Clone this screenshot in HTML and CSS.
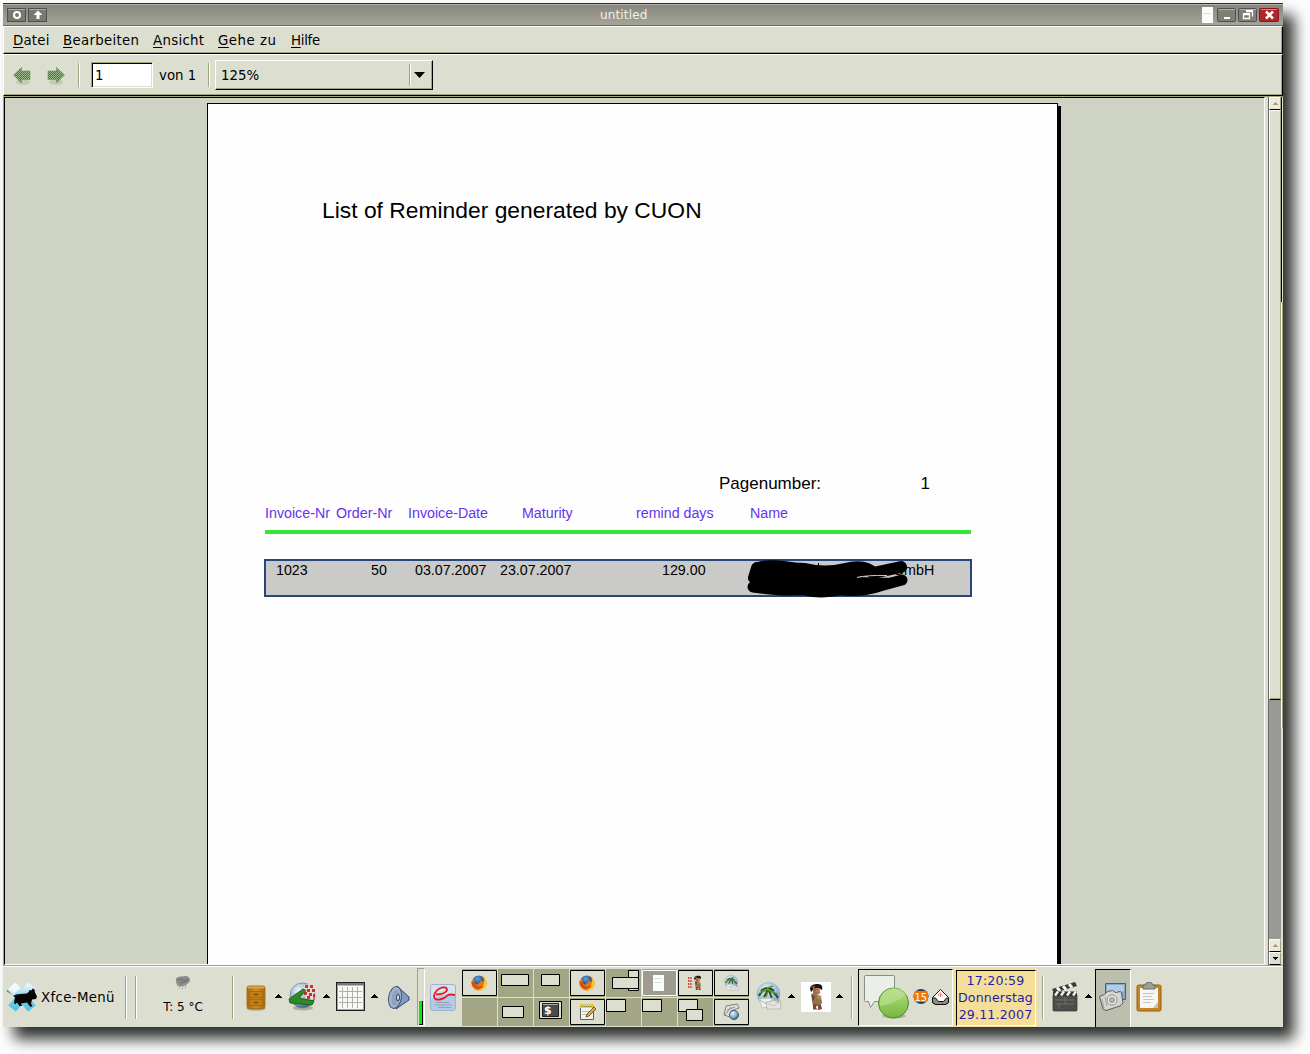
FILE: index.html
```html
<!DOCTYPE html>
<html lang="de">
<head>
<meta charset="utf-8">
<title>untitled</title>
<link rel="stylesheet" href="styles.css">
</head>
<body>
<svg class="defs" width="0" height="0">
  <defs>
    <radialGradient id="ball" cx=".35" cy=".3" r=".8"><stop offset="0" stop-color="#eef6fa"/><stop offset=".55" stop-color="#8fb0cc"/><stop offset="1" stop-color="#2c4a72"/></radialGradient>
    <radialGradient id="sky" cx=".4" cy=".3" r=".8"><stop offset="0" stop-color="#e3eff6"/><stop offset=".7" stop-color="#8db8d8"/><stop offset="1" stop-color="#5c8db8"/></radialGradient>
    <radialGradient id="fox" cx=".4" cy=".35" r=".7"><stop offset="0" stop-color="#59a8e0"/><stop offset="1" stop-color="#1b3c86"/></radialGradient>
    <linearGradient id="ice" x2="0" y2="1"><stop offset="0" stop-color="#e4f5fb"/><stop offset=".5" stop-color="#7fd0ec"/><stop offset="1" stop-color="#55c4ea"/></linearGradient>
    <linearGradient id="wood" x2="1"><stop offset="0" stop-color="#a96a10"/><stop offset=".5" stop-color="#d08c22"/><stop offset="1" stop-color="#a96a10"/></linearGradient>
    <linearGradient id="green" x2="0" y2="1"><stop offset="0" stop-color="#b4dd84"/><stop offset="1" stop-color="#76b83e"/></linearGradient>
    <pattern id="dither" width="2" height="2" patternUnits="userSpaceOnUse"><path d="M0 0h1v1h-1zM1 1h1v1h-1z" fill="#47724a"/><path d="M1 0h1v1h-1zM0 1h1v1h-1z" fill="#9bbb8c"/></pattern>
    <symbol id="firefox" viewBox="0 0 16 16">
      <circle cx="8" cy="8" r="7.600" fill="#e8760c"/>
      <path d="M13 2c3.500 3 3.500 9 0 12-2 1.500-4 1.800-6 1.500C12 13 14 7 13 2z" fill="#f8c62c"/>
      <path d="M3 2.500Q7-.5 11.500 2 13 4 12.500 7 11 5 9 5.500q1 2-1 2.500-1.500 0-1.500 1.500Q3 9 3.500 6 2.500 4 3 2.500z" fill="url(#fox)"/>
      <path d="M.4 6c0 5 4 8.500 9 7.500 2-.5 3-2 3-3.500-3 3-8 2-9-2z" fill="#cc4f0c"/>
    </symbol>
    <symbol id="up" viewBox="0 0 7 4"><path d="M3 0h1v1h1v1h1v1h1v1H0V3h1V2h1V1h1z" fill="#000"/></symbol>
    <symbol id="figure" viewBox="0 0 16 28">
      <path d="M2 6C2 2 6 1 10 1c4 0 5 3 4 6l-4-2-4 1-3 3z" fill="#1c1512"/>
      <path d="M5 5l6 .5 1.500 4-3 2.500-4.500-1.500z" fill="#a5694a"/><path d="M3 4l4-1-1 2zM8 7l4 1-1 2-3-1z" fill="#d9745e"/>
      <path d="M3 11l3-1 3 2 4 1 1 7-2 3H5L4 18z" fill="#8f7448"/><path d="M4 12l3 1-1 5-2-2z" fill="#6b4c33"/><path d="M9 12l4 1v4l-4-2z" fill="#b0885b"/>
      <path d="M5 21h4l-1 4 2 1.500H5zM10 22h3l1 4-4 1z" fill="#7c4630"/>
    </symbol>
    <symbol id="mailglobe" viewBox="0 0 26 28">
      <circle cx="12.500" cy="12" r="11.500" fill="url(#sky)" stroke="#8da7bd" stroke-width=".6"/>
      <path d="M3 14Q6 7 12 8T22 16M5 9Q12 3 18 9M12 8l-4 7M13 8l3 9" fill="none" stroke="#2a4a2a" stroke-width="2"/>
      <path d="M4 11Q10 6 14 8.500T22 12M11 6l6-2M12 10l-2 5" fill="none" stroke="#5f9e38" stroke-width="1.600"/>
      <path d="M3 17l14-1 2 8-13 2z" fill="#f1f1ee" stroke="#b5b5ac" stroke-width=".7"/><path d="M4 18l7 4 6-5" fill="none" stroke="#b0b0aa"/>
      <path d="M10 20l14-2 1 9H11z" fill="#e4e5e1" stroke="#a4a59e" stroke-width=".6"/><path d="M11 21l7 3 6-5" fill="none" stroke="#b5b5ad" stroke-width=".7"/><path d="M20.500 19.500h3M22 18v3" stroke="#d88" stroke-width=".8"/>
    </symbol>
  </defs>
</svg>

<div class="desktop">
  <header class="titlebar">
    <svg class="tb-left" width="55" height="15" viewBox="0 0 55 15" shape-rendering="crispEdges">
      <rect x="4.500" y=".5" width="18" height="13" rx="1" fill="#797972" stroke="#4f504b"/><path d="M5 1.500h17" stroke="#adada6"/>
      <rect x="25.500" y=".5" width="18" height="13" rx="1" fill="#797972" stroke="#4f504b"/><path d="M26 1.500h17" stroke="#adada6"/>
      <circle cx="14" cy="7" r="3" fill="none" stroke="#fff" stroke-width="2" shape-rendering="auto"/>
      <path d="M35 2.500l4.500 4.500h-3v4h-3V7h-3z" fill="#fff" shape-rendering="auto"/>
    </svg>
    <span class="title">untitled</span>
    <svg class="tb-right" width="81" height="16" viewBox="0 0 81 16">
      <path d="M0 0h11v16H0z" fill="#fbfcf9"/><path d="M1 6.500h8" stroke="#dce0d8"/>
      <rect x="15.500" y="1.500" width="18" height="13" rx="1" fill="#7f7f78" stroke="#4f504b"/><path d="M17 2.500h16" stroke="#b4b4ad"/>
      <rect x="36.500" y="1.500" width="18" height="13" rx="1" fill="#7f7f78" stroke="#4f504b"/><path d="M38 2.500h16" stroke="#b4b4ad"/>
      <rect x="57.500" y="1.500" width="19" height="13" rx="1" fill="#b02526" stroke="#8c1718"/><path d="M59 2.500h16" stroke="#dd7f7f"/>
      <path d="M22 11h6" stroke="#fff" stroke-width="2"/>
      <path d="M41.500 7.500h6v4h-6zM44 4.500h6.500v5" fill="none" stroke="#fff" stroke-width="1.300"/><path d="M41 7h7M44 4h7" stroke="#fff" stroke-width="2"/>
      <path d="M64 4.500l7 7M71 4.500l-7 7" stroke="#fff" stroke-width="2.600"/>
    </svg>
  </header>

  <nav class="menubar">
    <span class="m1"><u>D</u>atei</span><span class="m2"><u>B</u>earbeiten</span><span class="m3"><u>A</u>nsicht</span><span class="m4"><u>G</u>ehe zu</span><span class="m5"><u>H</u>ilfe</span>
  </nav>

  <div class="toolbar">
    <svg class="nav-arrow" width="18" height="20" viewBox="0 0 18 20"><ellipse cx="10" cy="16" rx="7" ry="3" fill="#c3cbb6"/><path d="M.5 9l8-7.500V5h8.500v8.500H8.500V17z" fill="url(#dither)" stroke="#6c945f" stroke-width=".6"/></svg>
    <svg class="nav-arrow next" width="18" height="20" viewBox="0 0 18 20"><ellipse cx="9" cy="16" rx="7" ry="3" fill="#c3cbb6"/><path d="M17.500 9l-8-7.500V5H1v8.500h8.500V17z" fill="url(#dither)" stroke="#6c945f" stroke-width=".6"/></svg>
    <i class="sep s1"></i>
    <div class="entry">1</div>
    <span class="of">von 1</span>
    <i class="sep s2"></i>
    <div class="combo"><span>125%</span><i class="combo-sep"></i><svg width="11" height="6" viewBox="0 0 11 6"><path d="M0 0h11L5.500 6z"/></svg></div>
  </div>

  <main class="viewer">
    <div class="canvas">
      <article class="page">
        <h1>List of Reminder generated by CUON</h1>
        <div class="pagenum"><span>Pagenumber:</span><span class="num">1</span></div>
        <div class="cols head"><span>Invoice-Nr</span><span>Order-Nr</span><span>Invoice-Date</span><span>Maturity</span><span>remind days</span><span>Name</span></div>
        <div class="rule"></div>
        <div class="row">
          <div class="cols data"><span>1023</span><span>50</span><span>03.07.2007</span><span>23.07.2007</span><span>129.00</span><span class="name">GmbH</span></div>
          <svg class="scribble" width="166" height="42" viewBox="0 0 166 42">
            <path d="M13 11Q25 8 38 10T60 12Q80 17 100 12T128 16L156 10" fill="none" stroke="#000" stroke-width="12" stroke-linecap="round" stroke-linejoin="round"/>
            <path d="M12 11L9 21L30 24Q75 28 105 21" fill="none" stroke="#000" stroke-width="12" stroke-linecap="round" stroke-linejoin="round"/>
            <path d="M8 30Q30 33 42 33T90 32Q115 36 135 29L157 23" fill="none" stroke="#000" stroke-width="11" stroke-linecap="round"/>
            <path d="M10 10L60 12 112 12 142 12 157 14 142 17 112 20 150 21 130 32 90 34 20 32z"/>
            <path d="M56 32Q80 39 106 29" fill="none" stroke="#000" stroke-width="11" stroke-linecap="round"/>
            <path d="M73.500 6v6M120.500 6v6" stroke="#000"/>
            <path d="M112 20.500q10-2.500 30-2" fill="none" stroke="#cacbc8"/>
          </svg>
        </div>
      </article>
    </div>
    <div class="scrollbar">
      <div class="sbtn dim"><svg width="5" height="3" viewBox="0 0 5 3"><path d="M2 0h1v1h1v1h1v1H0V2h1V1h1z" fill="#a0a287"/></svg></div>
      <div class="slider"></div>
      <div class="trough"></div>
      <div class="sbtn dim"><svg width="5" height="3" viewBox="0 0 5 3"><path d="M2 0h1v1h1v1h1v1H0V2h1V1h1z" fill="#a0a287"/></svg></div>
      <div class="sbtn"><svg width="5" height="3" viewBox="0 0 5 3"><path d="M0 0h5v1H4v1H3v1H2V2H1V1H0z"/></svg></div>
    </div>
    <div class="edge"><i></i><b></b></div>
  </main>

  <footer class="panel">
    <svg class="xfce" width="30" height="32" viewBox="0 0 30 32">
      <path d="M5 4.500L25 27.500M25 4.500L5 27.500" stroke="url(#ice)" stroke-width="10"/><path d="M1.500 8L8 1.500l5 5.500-6 6z" fill="#fff" opacity=".7"/>
      <path d="M0 9l6 6q3-2 7-2l7-.5 2-2 .5-1.500 2 .5 1-2 2 1 .5 3 2 4-1 2.500-4 .5-1 4 1.500 3h-2.500l-3-4-6 1 1 2.500h-2.500l-2.500-3.500-2 2-1-2 1-5L0 10z" fill="#050505"/>
    </svg>
    <span class="menu-label">Xfce-Menü</span>
    <i class="sep p1"></i><i class="sep p2"></i>
    <div class="weather">
      <svg width="16" height="15" viewBox="0 0 16 15"><path d="M1 5q-1-4 3-4 1-1 4-.5 4-1.500 6 1 2 2 0 5l-4 3-5 1Q1 9 1 5z" fill="#8c8d8a"/><path d="M3 4q3-2 5 0t5-1M5 7l4-1 4-2" fill="none" stroke="#6d6e6b"/><path d="M5 10l-1 3M8 10l-1 4M11 9l-1 4M3 9l-1 2" stroke="#8090a0" stroke-dasharray="1 1"/></svg>
      <span>T: 5 °C</span>
    </div>
    <i class="sep p3"></i>
    <svg class="cab" width="20" height="26" viewBox="0 0 20 26"><ellipse cx="10" cy="23.500" rx="9.500" ry="2" fill="#9a9a80"/><rect x="1" y="1" width="18" height="22.500" rx="2" fill="url(#wood)" stroke="#a8741c"/><path d="M2 2.500h16" stroke="#dea548" stroke-width="2"/><path d="M3.500 6.500h13v6h-13zM3.500 14.500h13v6h-13z" fill="#c07e18" stroke="#a06810" stroke-width=".8"/><path d="M8 9.500h4M8 17.500h4" stroke="#7c4e0a" stroke-width="1.500"/></svg>
    <svg class="up a1"><use href="#up"/></svg>
    <svg class="globe" width="29" height="29" viewBox="0 0 29 29"><ellipse cx="15" cy="26" rx="10" ry="2.500" fill="#aab09f"/><circle cx="14.500" cy="13.500" r="12.500" fill="url(#ball)" stroke="#6c8093" stroke-width=".7"/><path d="M16 3l6-1 5 7-2 9-7-1-2-6z" fill="#e4dcd6"/><path d="M17 3h3v3h-3zM22 3h3v3h-3zM19 7h3v3h-3zM24 7h3v3h-3zM16 10h3v3h-3zM21 11h3v3h-3zM25 12h2v3h-2zM19 14h3v3h-3z" fill="#c8322c"/><path d="M1 17L15 7l3 1.500L11 16l15 3-2 4-22-2z" fill="#2f8a26" stroke="#155511" stroke-width=".8"/></svg>
    <svg class="up a2"><use href="#up"/></svg>
    <svg class="cal" width="29" height="29" viewBox="0 0 29 29" shape-rendering="crispEdges"><path d="M0 0h29v29H0z" fill="#1c1e1f"/><path d="M1 1h27v27H1z" fill="#9fa2a2"/><path d="M2 2h25v25H2z" fill="#f8f8f5"/><path d="M1 1h27v2H1z" fill="#74797b"/><path d="M2 3.500h25" stroke="#b9bbb8"/><path d="M6.500 5v21M11.500 5v21M16.500 5v21M21.500 5v21M3 9.500h23M3 15.500h23M3 20.500h23" stroke="#b0b1ae"/></svg>
    <svg class="up a3"><use href="#up"/></svg>
    <svg class="speaker" width="22" height="25" viewBox="0 0 22 25"><path d="M9 1l12 11v3L8 24z" fill="#7f9abc" stroke="#324b70"/><ellipse cx="7" cy="12.500" rx="6.300" ry="11" transform="rotate(10 7 12.500)" fill="#a6b6c9" stroke="#3e587d"/><ellipse cx="7.500" cy="12.500" rx="4" ry="8" transform="rotate(10 7 12.500)" fill="#8fa3ba"/><ellipse cx="10" cy="12.500" rx="1.500" ry="3.200" fill="#dbe5ed" stroke="#1d3657"/></svg>
    <div class="meter"><i></i></div>
    <svg class="evo" width="26" height="28" viewBox="0 0 26 28"><rect x=".5" y=".5" width="25" height="26" rx="2.500" fill="#b4c9e3" stroke="#9db3d0"/><path d="M1 3Q1 1 3 1h20q2 0 2 2v7Q12 10 1 15z" fill="#d6e2f0"/><path d="M6 18.500h13M4 21h18M8 23.500h13" stroke="#8da2bd" stroke-width="1.100"/><path d="M6 10.500Q16 10 17 6 17 2.500 12 3.500 5 6 4 12q0 4.500 6 3.500 5-1 8-4.500 2-1 7 0" fill="none" stroke="#e21a22" stroke-width="1.800"/></svg>

    <div class="pager">
      <svg><path class="win" d="M.5 1.500h34v25H.5z"/><use href="#firefox" x="9" y="6" width="16" height="16"/></svg>
      <svg><path class="win" d="M3.500 5.500h27v11h-27z"/></svg>
      <svg><path class="win" d="M7.500 5.500h18v11h-18z"/></svg>
      <svg><path class="win" d="M.5 1.500h34v25H.5z"/><use href="#firefox" x="9" y="6" width="16" height="16"/></svg>
      <svg><path class="win" d="M22.500 1.500h10v20h-10z"/><path class="win" d="M6.500 8.500h26v11h-26z"/></svg>
      <svg><path d="M.5 1.500h34v25H.5z" fill="#9f9b91" stroke="#fff"/><path d="M11 6h11v16H11z" fill="#fbfdf9"/><path d="M12 9.500h8M12 13.500h8" stroke="#d7e3d5"/></svg>
      <svg><path class="win" d="M.5 1.500h34v25H.5z"/><path d="M10 9h4M10 12h4M10 15h4M10 18h4" stroke="#d34d45" stroke-width="2" stroke-dasharray="1.500 .7"/><use href="#figure" x="15" y="6" width="9" height="16"/></svg>
      <svg><path class="win" d="M.5 1.500h34v25H.5z"/><use href="#mailglobe" x="10" y="6" width="15" height="16"/></svg>
      <svg></svg>
      <svg><path class="win" d="M4.500 8.500h21v11h-21z"/></svg>
      <svg><path class="win" d="M5.500 3.500h22v17h-22z"/><path d="M8.500 5.500h16v13h-16z" fill="#484b49" stroke="#1e211f"/><path d="M9 6h15v1H9z" fill="#aaa"/><text x="10" y="15.500" class="dollar">$</text></svg>
      <svg><path class="win" d="M.5 1.500h34v25H.5z"/><path d="M10.500 8.500h13v13h-13z" fill="#f2f3ee" stroke="#5e605a"/><path d="M10 8h14" stroke="#e7bd18" stroke-width="4" stroke-dasharray="1.500 .8"/><path d="M12 13.500h7M12 16.500h5" stroke="#bcbfb8"/><path d="M16 19l1-3 7-7 2 2-7 7z" fill="#dfa83b" stroke="#433217" stroke-width=".7"/></svg>
      <svg><path class="win" d="M.5 1.500h19v12H.5z"/></svg>
      <svg><path class="win" d="M.5 1.500h19v12H.5z"/></svg>
      <svg><path class="win" d="M.5 1.500h19v12H.5z"/><path class="win" d="M8.500 11.500h16v11h-16z"/></svg>
      <svg><path class="win" d="M.5 1.500h34v25H.5z"/><path d="M12 8l11-2 2 4-8 3-1 6-6-2z" fill="#dfe0dc" stroke="#7d817d"/><path d="M13 12l8-3M11 17l6-8" stroke="#90948f"/><circle cx="20" cy="17" r="4.500" fill="url(#ball)" stroke="#34587e"/></svg>
    </div>

    <svg class="mail" width="26" height="28"><use href="#mailglobe"/></svg>
    <svg class="up a4"><use href="#up"/></svg>
    <svg class="fig" width="30" height="30"><path d="M0 0h30v30H0z" fill="#fff"/><use href="#figure" x="7" y="1" width="16" height="28"/></svg>
    <svg class="up a5"><use href="#up"/></svg>
    <i class="sep p4"></i>
    <div class="tray">
      <svg width="94" height="56" viewBox="0 0 94 56">
        <ellipse cx="35" cy="46" rx="12" ry="2.500" fill="#aeb39f"/>
        <path d="M6.500 5.500h28q1 0 1 1v25h-20l-4 6-2-6h-3q-1 0-1-1v-24q0-1 1-1z" fill="#eceeea" stroke="#8a8d86"/>
        <circle cx="34.500" cy="33" r="15" fill="url(#green)" stroke="#4e8b27"/><path d="M21 36q12-1 26-11-3-7-12-7-13 1-14 15z" fill="#bfe396" opacity=".6"/>
        <circle cx="62" cy="26.500" r="7.500" fill="#31414b"/><rect x="55" y="21" width="14" height="11" rx="3" fill="#f0760b"/><text x="55.500" y="30.500" class="badge">15</text>
        <path d="M73.500 27.500l8-8 8 8v5l-3 2h-10l-3-2z" fill="#fff" stroke="#111"/><path d="M73.500 28h3l3 3.500h5l3-3.500h2v4.500l-3 2h-10l-3-2z" fill="#8b8c86" stroke="#111"/><path d="M79 25h5M81.500 22.500v5" stroke="#e33" stroke-width="1" stroke-dasharray="1 .7"/>
      </svg>
    </div>
    <div class="clock"><div><span>17:20:59</span><span>Donnerstag</span><span>29.11.2007</span></div></div>
    <i class="sep p5"></i>
    <svg class="clap" width="28" height="30" viewBox="0 0 28 30"><path d="M2 13h24v15q0 1-1 1H3q-1 0-1-1z" fill="#4b4e4a" stroke="#2e302d" stroke-width=".7"/><path d="M1 7L24 0l2 4L3 11z" fill="#393b38"/><path d="M6 5.500l3 3.500M12 4l3 3.500M18 2l3 3.500" stroke="#f3f3ee" stroke-width="3"/><path d="M2 9.500h24v4.500H2z" fill="#333"/><path d="M7 9.500l-3 4M13 9.500l-3 4M19 9.500l-3 4M25 9.500l-3 4" stroke="#efefea" stroke-width="2.500"/><path d="M4 18h19M4 22h19M14 15v7M8 22v5" stroke="#767a73" stroke-width=".8"/></svg>
    <svg class="up a6"><use href="#up"/></svg>
    <div class="pressed"><svg width="30" height="30" viewBox="0 0 30 30"><path d="M7.500 1.500h20v16h-20z" fill="#84a9cf" stroke="#4c5f78"/><path d="M9 3h17v6L9 14z" fill="#b4cde6"/><path d="M1.500 14.500l5-2 3-3 5-1 3 2 5-1 1 1.500 1.500 10-3 3-14 4.500-3-1.500z" fill="#d5d6d2" stroke="#5a5d5a"/><circle cx="14" cy="18" r="5" fill="#eeeeec" stroke="#8a8e8b"/><circle cx="14" cy="18" r="2.500" fill="#b5bab8" stroke="#888"/><path d="M4 17l2 9M7 15l2 9" stroke="#a0a4a0"/></svg></div>
    <svg class="clip" width="26" height="31" viewBox="0 0 26 31"><rect x="1" y="3" width="24" height="26" rx="1.500" fill="#c68627" stroke="#93600f"/><path d="M4 6h18v20H4z" fill="#f6f7f4"/><path d="M17 26l5-6v6z" fill="#c1c3bd"/><path d="M7 3.500L9 3q1-3 4-3t4 3l2 .5V7H7z" fill="#9b9f96" stroke="#6b6e67"/><path d="M7 11.500h11M7 14.500h9M7 17.500h11M7 20.500h8" stroke="#c5c7c2"/></svg>
  </footer>
</div>
</body>
</html>
```
FILE: styles.css
```css
* { box-sizing: border-box; }
body { margin: 0; background: #fefefe; width: 1310px; height: 1054px; overflow: hidden; font-family: "DejaVu Sans", sans-serif; color: #000; }
svg { display: block; flex: none; }
.defs { position: absolute; }
.desktop { width: 1280px; height: 1024px; margin: 3px 0 0 3px; background: #dcdfd0; display: flex; flex-direction: column; box-shadow: 11px 12px 14px 0 #2e322e; }

.titlebar { height: 23px; flex: none; display: flex; align-items: center; background: linear-gradient(#86867f, #a5a49a); border-top: 1px solid #2c2e2a; border-bottom: 1px solid #696b63; box-shadow: inset 0 1px #b5b5ad; }
.tb-left { width: 55px; margin-top: 2px; }
.title { width: 1149px; padding: 2px 0 0 542px; font-size: 12px; line-height: 19px; color: #f0f0ea; letter-spacing: .15px; }
.tb-right { margin-left: -5px; margin-top: 1px; }

.menubar { height: 28px; flex: none; display: flex; border: 1px solid #fff; border-right: 1px solid #000; border-bottom: 1px solid #000; box-shadow: inset -1px -1px #a0a57f; padding-left: 9px; font-size: 13.330px; line-height: 28px; white-space: nowrap; }
.menubar span { flex: none; }
.menubar u { text-underline-offset: 2px; text-decoration-thickness: 1px; }
.m1 { width: 50px; letter-spacing: .2px; } .m2 { width: 90px; letter-spacing: .3px; } .m3 { width: 65px; letter-spacing: .3px; } .m4 { width: 73px; letter-spacing: .5px; } .m5 { letter-spacing: -.3px; }

.toolbar { height: 42px; flex: none; display: flex; align-items: center; border: 1px solid #fff; border-right: 1px solid #000; border-bottom: 1px solid #000; box-shadow: inset -1px -1px #a0a57f; font-size: 13.330px; padding-left: 9px; }
.nav-arrow { margin-top: 2px; }
.nav-arrow.next { margin-left: 16px; }
.sep { width: 2px; flex: none; border-left: 1px solid #a0a57f; border-right: 1px solid #fff; }
.s1 { height: 24px; margin-left: 13px; }
.entry { width: 62px; height: 26px; margin-left: 11px; background: #fff; border: 1px solid #a0a57f; border-right-color: #fff; border-bottom-color: #fff; box-shadow: inset 1px 1px #000, inset -1px -1px #dcdfd0; padding-left: 3px; line-height: 25px; }
.of { width: 49px; margin-left: 6px; white-space: nowrap; }
.s2 { height: 24px; }
.combo { width: 218px; height: 30px; margin: -1px 0 0 5px; display: flex; align-items: center; border: 1px solid #fff; border-right-color: #000; border-bottom-color: #000; box-shadow: inset -1px -1px #a0a57f; padding-left: 5px; }
.combo span { width: 188px; padding-top: 1px; }
.combo-sep { width: 2px; height: 22px; border-left: 1px solid #a0a57f; border-right: 1px solid #fff; margin-right: 3px; }

.viewer { height: 870px; flex: none; display: flex; border-top: 1px solid #a0a57f; border-left: 1px solid #a0a57f; }
.canvas { width: 1261px; height: 868px; background: #cfd3c3; border-top: 1px solid #000; border-left: 1px solid #000; border-right: 1px solid #fff; border-bottom: 1px solid #fff; overflow: hidden; padding: 5px 0 0 202px; }
.page { width: 851px; height: 1100px; background: #fefefe; border: 1px solid #000; box-shadow: 3px 3px #000; font-family: "Liberation Sans", sans-serif; padding-left: 57px; }
.page h1 { margin: 92px 0 0 57px; font-weight: 400; font-size: 22.850px; line-height: 28px; height: 28px; white-space: nowrap; }
.pagenum { display: flex; margin: 250px 0 0 454px; font-size: 17px; line-height: 20px; height: 20px; }
.num { margin-left: auto; margin-right: 127px; }
.cols { display: grid; white-space: nowrap; font-size: 14.250px; line-height: 18px; }
.head { grid-template-columns: 71px 72px 114px 114px 114px 100px; color: #6633ee; margin-top: 10px; height: 18px; }
.rule { width: 706px; height: 4px; background: #35e535; margin-top: 8px; }
.row { position: relative; width: 708px; height: 38px; margin: 25px 0 0 -1px; background: #cacbc8; border: 2px solid #2a4577; }
.data { grid-template-columns: 95px 44px 85px 162px 83px 200px; padding-left: 10px; }
.name { padding-left: 148px; }
.scribble { position: absolute; left: 479px; top: -4px; }

.scrollbar { width: 13px; margin-left: 3px; height: 868px; display: flex; flex-direction: column; border-left: 1px solid #696b66; }
.sbtn { height: 13px; flex: none; display: flex; align-items: center; justify-content: center; background: #dcdfd0; border: 1px solid #fff; border-right-color: #a0a57f; border-bottom-color: #000; }
.dim { background: #eee9d9; }
.slider { height: 590px; flex: none; border: 1px solid #fff; border-right-color: #a0a57f; border-bottom-color: #000; box-shadow: inset 0 -1px #a0a57f; }
.trough { flex: 1; background: #999a97; }
.edge { width: 2px; display: flex; flex-direction: column; background: #dcdfd0; }
.edge i { height: 205px; width: 1px; background: #000; }
.edge b { height: 426px; border-left: 1px solid #fff; border-right: 1px solid #a0a57f; }

.panel { flex: 1; display: flex; align-items: flex-start; background: #dcdfd0; border-top: 1px solid #fff; box-shadow: 0 -1px #a0a57f; padding-left: 3px; }
.panel > * { flex: none; margin-top: 15px; }
.xfce { margin-left: 1px; margin-right: 4px; }
.panel > .xfce { margin-top: 14px; }
.menu-label { width: 84px; font-size: 13.330px; line-height: 31px; letter-spacing: .35px; white-space: nowrap; }
.panel > .sep { height: 43px; margin-top: 9px; }
.p2 { margin-left: 8px; }
.weather { width: 95px; display: flex; flex-direction: column; align-items: center; font-size: 12px; line-height: 14px; }
.weather svg { margin-right: 3px; }
.panel > .weather { margin-top: 9px; }
.weather span { margin-top: 9px; padding-right: 3px; }
.cab { margin-left: 12px; }
.panel > .cab { margin-top: 18px; }
.panel > .up { width: 7px; height: 4px; margin-top: 27px; }
.a1 { margin-left: 9px; }
.globe { margin-left: 6px; }
.a2 { margin-left: 6px; }
.cal { margin-left: 6px; }
.a3 { margin-left: 6px; }
.speaker { margin-left: 10px; }
.panel > .speaker { margin-top: 18px; }
.panel > .meter { width: 8px; height: 58px; margin: 1px 0 0 7px; border: 1px solid #a0a57f; border-right-color: #fff; border-bottom-color: #fff; display: flex; align-items: flex-end; padding-left: 1px; }
.meter i { width: 4px; height: 24px; background: #00ee00; border-right: 1px solid #000; border-bottom: 1px solid #000; }
.evo { margin-left: 5px; }
.panel > .evo { margin-top: 17px; }
.panel > .pager { margin: 2px 0 0 6px; display: grid; grid-template-columns: repeat(8, 35px); grid-template-rows: 28px 28px; gap: 1px; }
.pager svg { width: 35px; height: 28px; background: #a3a684; }
.win { fill: #dcdfd0; stroke: #000; }
.dollar { font: bold 11px "DejaVu Sans", sans-serif; fill: #fff; }
.mail { margin-left: 7px; }
.a4 { margin-left: 6px; }
.fig { margin-left: 6px; }
.a5 { margin-left: 5px; }
.p4 { margin-left: 8px; }
.panel > .tray { width: 95px; height: 57px; margin: 2px 0 0 5px; border: 1px solid #000; border-right-color: #fff; border-bottom-color: #fff; }
.badge { font-size: 10px; fill: #fff; }
.panel > .clock { width: 84px; height: 60px; margin: 0 0 0 1px; padding: 3px 2px 1px; background: #f5dd9a; }
.clock div { height: 56px; border: 1px solid #000; border-right-color: #fff; border-bottom-color: #fff; display: flex; flex-direction: column; align-items: center; font-size: 12.600px; letter-spacing: .15px; line-height: 17px; padding: 1px 1px 0 0; color: #1f1fa5; white-space: nowrap; }
.p5 { margin-left: 4px; }
.clap { margin-left: 7px; }
.a6 { margin-left: 6px; }
.panel > .pressed { width: 36px; height: 58px; margin: 2px 0 0 3px; background: #bbbfad; border: 1px solid #000; border-right-color: #fff; border-bottom: 0; padding: 12px 0 0 2px; }
.clip { margin-left: 5px; }
```
